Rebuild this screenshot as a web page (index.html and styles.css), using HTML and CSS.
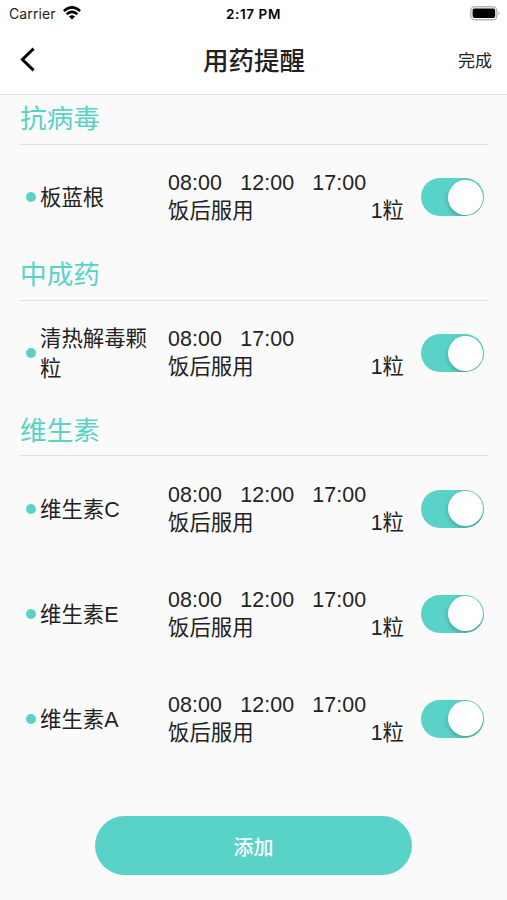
FILE: index.html
```html
<!DOCTYPE html>
<html lang="zh-CN">
<head>
	<meta charset="UTF-8">
	<title>用药提醒</title>
	<link rel="stylesheet" href="styles.css">
</head>
<body>
	<div class="status_bar">
		<div class="carrier">
			<span>Carrier</span>
			<svg class="wifi" width="18" height="14" viewBox="0 0 18 14">
				<path d="M.9 5.1Q9-2.3 17.1 5.1M3.6 8.3Q9 3.5 14.4 8.3" fill="none" stroke="#000" stroke-width="2.6"/>
				<path d="M5.9 10.5Q9 8 12.1 10.5L9 13.6Z"/>
			</svg>
		</div>
		<div class="clock">2:17 PM</div>
		<div class="power">
			<svg width="30" height="15" viewBox="0 0 30 15">
				<rect x=".8" y=".8" width="26" height="13" rx="3.8" fill="#fff" stroke="#b5b5b5" stroke-width="1.4"/>
				<rect x="2.6" y="2.6" width="22.6" height="9.4" rx="2"/>
				<path d="M28.3 5.2Q31 7.3 28.3 9.4Z" fill="#b5b5b5"/>
			</svg>
		</div>
	</div>
	<div class="header">
		<a class="back" href="#">
			<svg width="16" height="25" viewBox="0 0 16 25">
				<path d="M13.6 1.6L2.4 12.5L13.6 23.4" fill="none" stroke="#000" stroke-width="2.9"/>
			</svg>
		</a>
		<h1>用药提醒</h1>
		<a class="done" href="#">完成</a>
	</div>
	<div class="content">
		<h2>抗病毒</h2>
		<div class="item">
			<div class="name"><i class="dot"></i><span>板蓝根</span></div>
			<div class="info">
				<div class="time">08:00   12:00   17:00</div>
				<div class="usage"><span>饭后服用</span><span>1粒</span></div>
			</div>
			<div class="switch"><i></i></div>
		</div>
		<h2>中成药</h2>
		<div class="item">
			<div class="name"><i class="dot"></i><span>清热解毒颗粒</span></div>
			<div class="info">
				<div class="time">08:00   17:00</div>
				<div class="usage"><span>饭后服用</span><span>1粒</span></div>
			</div>
			<div class="switch"><i></i></div>
		</div>
		<h2>维生素</h2>
		<div class="item">
			<div class="name"><i class="dot"></i><span>维生素C</span></div>
			<div class="info">
				<div class="time">08:00   12:00   17:00</div>
				<div class="usage"><span>饭后服用</span><span>1粒</span></div>
			</div>
			<div class="switch"><i></i></div>
		</div>
		<div class="item">
			<div class="name"><i class="dot"></i><span>维生素E</span></div>
			<div class="info">
				<div class="time">08:00   12:00   17:00</div>
				<div class="usage"><span>饭后服用</span><span>1粒</span></div>
			</div>
			<div class="switch"><i></i></div>
		</div>
		<div class="item">
			<div class="name"><i class="dot"></i><span>维生素A</span></div>
			<div class="info">
				<div class="time">08:00   12:00   17:00</div>
				<div class="usage"><span>饭后服用</span><span>1粒</span></div>
			</div>
			<div class="switch"><i></i></div>
		</div>
	</div>
	<button class="add">添加</button>
</body>
</html>
```
FILE: styles.css
```css
*{
	box-sizing:border-box;
}
body{
	margin:0;
	height:900px;
	overflow:hidden;
	background-color:#fafafa;
	color:#222;
	font-family:"Liberation Sans","Noto Sans CJK SC",sans-serif;
}
h1,h2{
	margin:0;
}
a{
	color:#222;
	text-decoration:none;
}
svg{
	display:block;
}
.status_bar{
	display:grid;
	grid-template-columns:1fr auto 1fr;
	align-items:center;
	height:27px;
	padding:0 7px 0 9px;
	background-color:#fff;
	font-family:Inter,sans-serif;
	font-size:14px;
}
.carrier{
	display:flex;
	align-items:center;
	gap:7px;
	letter-spacing:.1px;
}
.wifi{
	margin-top:-2px;
}
.clock{
	font-size:13.5px;
	font-weight:600;
	letter-spacing:.6px;
	color:#000;
	margin-right:2px;
}
.power{
	justify-self:end;
}
.header{
	display:grid;
	grid-template-columns:1fr auto 1fr;
	align-items:center;
	height:68px;
	padding:0 15px 2px 20px;
	background-color:#fff;
	border-bottom:1px solid #e0e0e0;
}
.header h1{
	margin-right:4px;
	padding-top:2px;
	font-size:25.5px;
	font-weight:500;
	line-height:38px;
}
.done{
	justify-self:end;
	font-size:17px;
}
.content{
	margin-top:-1px;
	padding:0 19px 0 20px;
}
.content h2{
	height:50.75px;
	border-bottom:1px solid #e0e0e0;
	color:#59d2c8;
	font-size:26.7px;
	font-weight:400;
	line-height:51px;
}
.item{
	display:flex;
	align-items:center;
	height:105px;
	padding:0 4px 0 6px;
	font-size:21.4px;
}
.name{
	display:flex;
	align-items:center;
	gap:4px;
	width:142px;
	padding-right:18px;
	line-height:30px;
}
.name span{
	padding-top:2px;
}
.dot{
	flex:none;
	width:10px;
	height:10px;
	border-radius:50%;
	background-color:#59d2c8;
}
.info{
	width:236px;
	line-height:28px;
}
.time{
	letter-spacing:.1px;
	white-space:pre;
}
.usage{
	display:flex;
	justify-content:space-between;
}
.switch{
	display:flex;
	justify-content:flex-end;
	width:63px;
	height:38px;
	margin-left:auto;
	padding:1.5px 1px;
	border-radius:19px;
	background-color:#59d2c8;
	overflow:hidden;
}
.switch i{
	width:35px;
	height:35px;
	border-radius:50%;
	background-color:#fff;
	box-shadow:0 2px 4px rgba(0,0,0,.25);
}
.add{
	display:block;
	width:317px;
	height:59px;
	margin:45px auto 0;
	padding:2px 0 0;
	border:0;
	border-radius:30px;
	background-color:#59d2c8;
	color:#fff;
	font-family:inherit;
	font-size:20px;
	font-weight:500;
}
```
